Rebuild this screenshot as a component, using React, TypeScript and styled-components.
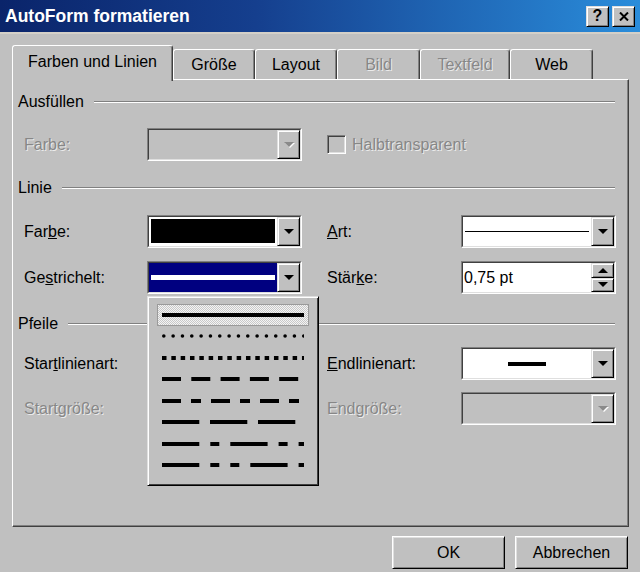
import React from "react"
import styled, { createGlobalStyle } from "styled-components"

const GlobalStyle = createGlobalStyle`
    html, body {
        margin: 0;
        padding: 0;
    }
    body {
        background: #c0c0c0;
        font-family: "Liberation Sans", Arial, sans-serif;
        font-size: 16px;
        color: #000;
    }
`

const Window = styled.div`
    width: 640px;
    height: 572px;
    overflow: hidden;
    background: #c0c0c0;
    display: flex;
    flex-direction: column;
`

const TitleBar = styled.div`
    height: 32px;
    flex: none;
    display: flex;
    align-items: center;
    justify-content: space-between;
    padding: 0 5px 0 5px;
    background: linear-gradient(90deg, #0a246a 0%, #153f8e 40%, #2a8ddb 100%);
    border-bottom: 2px solid #d4d0c8;
`

const Title = styled.span`
    color: #fff;
    font-weight: bold;
    font-size: 17.5px;
`

const CaptionButtons = styled.div`
    display: flex;
    gap: 3px;
`

const CaptionButton = styled.div`
    width: 23px;
    height: 21px;
    box-sizing: border-box;
    background: #c0c0c0;
    border: 1px solid;
    border-color: #dfdfdf #000 #000 #dfdfdf;
    box-shadow: inset 1px 1px #fff, inset -1px -1px #808080;
    display: flex;
    align-items: center;
    justify-content: center;
    font-weight: bold;
    font-size: 16px;
`

const Body = styled.div`
    padding: 11px 11px 0 12px;
    display: flex;
    flex-direction: column;
`

const TabStrip = styled.div`
    height: 34px;
    display: flex;
    align-items: flex-end;
`

const Tab = styled.div<{ $w: number; $active?: boolean; $disabled?: boolean }>`
    width: ${p => p.$w}px;
    height: ${p => (p.$active ? 36 : 30)}px;
    margin-bottom: ${p => (p.$active ? -2 : 0)}px;
    box-sizing: border-box;
    position: relative;
    z-index: ${p => (p.$active ? 2 : 1)};
    background: #c0c0c0;
    border: 1px solid;
    border-bottom: none;
    border-color: #fff #404040 transparent #fff;
    border-radius: 3px 3px 0 0;
    box-shadow: inset -1px 0 #808080;
    display: flex;
    align-items: center;
    justify-content: center;
    padding-bottom: ${p => (p.$active ? 3 : 0)}px;
    color: ${p => (p.$disabled ? "#878787" : "#000")};
    text-shadow: ${p => (p.$disabled ? "1px 1px 0 rgba(255,255,255,0.7)" : "none")};
`

const Panel = styled.div`
    position: relative;
    width: 617px;
    height: 448px;
    box-sizing: border-box;
    border: 1px solid;
    border-color: #fff #404040 #404040 #fff;
    box-shadow: inset -1px -1px #808080;
    display: flex;
    flex-direction: column;
`

const SectionHeader = styled.div<{ $mt: number }>`
    margin-top: ${p => p.$mt}px;
    height: 20px;
    display: flex;
    align-items: center;
    gap: 10px;
    padding: 0 13px 0 5px;

    &::after {
        content: "";
        flex: 1;
        border-top: 1px solid #808080;
        border-bottom: 1px solid #fff;
    }
`

const FieldRow = styled.div<{ $mt: number }>`
    margin-top: ${p => p.$mt}px;
    height: 33px;
    display: grid;
    grid-template-columns: 123px 180px 134px 155px;
    align-items: center;
    padding-left: 11px;
`

const Label = styled.span<{ $disabled?: boolean }>`
    color: ${p => (p.$disabled ? "#878787" : "#000")};
    text-shadow: ${p => (p.$disabled ? "1px 1px 0 rgba(255,255,255,0.7)" : "none")};
    white-space: nowrap;
`

const Combo = styled.div`
    width: 155px;
    height: 33px;
    box-sizing: border-box;
    border: 1px solid;
    border-color: #808080 #fff #fff #808080;
    display: flex;
`

const ComboInner = styled.div<{ $disabled?: boolean }>`
    flex: 1;
    display: flex;
    border: 1px solid;
    border-color: #404040 #dfdfdf #dfdfdf #404040;
    background: ${p => (p.$disabled ? "#c0c0c0" : "#fff")};
`

const ComboValue = styled.div<{ $bg?: string }>`
    flex: 1;
    display: flex;
    align-items: center;
    background: ${p => p.$bg || "transparent"};
`

const Swatch = styled.div`
    flex: 1;
    align-self: stretch;
    margin: 2px 2px 3px 2px;
    background: #000;
`

const LineFill = styled.div<{ $thick: number; $color: string; $inset: number }>`
    flex: 1;
    height: ${p => p.$thick}px;
    margin: 0 ${p => p.$inset}px;
    background: ${p => p.$color};
`

const ArrowSample = styled.div`
    width: 38px;
    height: 4px;
    margin: 0 auto;
    background: #000;
`

const ValueText = styled.span`
    padding-left: 1px;
`

const DropButton = styled.div<{ $disabled?: boolean }>`
    width: 23px;
    flex: none;
    box-sizing: border-box;
    background: #c0c0c0;
    border: 1px solid;
    border-color: #dfdfdf #000 #000 #dfdfdf;
    box-shadow: inset 1px 1px #fff, inset -1px -1px #808080;
    display: flex;
    align-items: center;
    justify-content: center;

    &::before {
        content: "";
        border-left: 5px solid transparent;
        border-right: 5px solid transparent;
        border-top: 5px solid ${p => (p.$disabled ? "#8a8a8a" : "#000")};
        filter: ${p => (p.$disabled ? "drop-shadow(1px 1px 0 #fff)" : "none")};
    }
`

const SpinColumn = styled.div`
    width: 23px;
    flex: none;
    display: flex;
    flex-direction: column;
`

const SpinButton = styled.div<{ $up?: boolean }>`
    flex: 1;
    box-sizing: border-box;
    background: #c0c0c0;
    border: 1px solid;
    border-color: #dfdfdf #000 #000 #dfdfdf;
    box-shadow: inset 1px 1px #fff, inset -1px -1px #808080;
    display: flex;
    align-items: center;
    justify-content: center;

    &::before {
        content: "";
        border-left: 5px solid transparent;
        border-right: 5px solid transparent;
        ${p => (p.$up ? "border-bottom: 5px solid #000;" : "border-top: 5px solid #000;")}
    }
`

const CheckGroup = styled.div`
    display: flex;
    align-items: center;
    gap: 6px;
    grid-column: 3 / 5;
`

const CheckBox = styled.span`
    width: 19px;
    height: 19px;
    box-sizing: border-box;
    border: 1px solid;
    border-color: #808080 #fff #fff #808080;
    box-shadow: inset 1px 1px #404040, inset -1px -1px #dfdfdf;
    background: #c0c0c0;
`

const Popup = styled.div`
    position: absolute;
    left: 134px;
    top: 216px;
    width: 172px;
    height: 190px;
    box-sizing: border-box;
    z-index: 5;
    background: #c0c0c0;
    border: 1px solid;
    border-color: #dfdfdf #000 #000 #dfdfdf;
    box-shadow: inset 1px 1px #fff, inset -1px -1px #404040;
    padding: 7px 9px 0 9px;
    display: flex;
    flex-direction: column;
`

const PopupRow = styled.div<{ $selected?: boolean }>`
    height: 21.5px;
    box-sizing: border-box;
    display: flex;
    align-items: center;
    padding: 0 4px;
    border: 1px solid ${p => (p.$selected ? "#9a9a9a" : "transparent")};
    background: ${p =>
        p.$selected
            ? "repeating-conic-gradient(#c8c8c8 0 25%, #f4f4f4 0 50%) 0 0 / 2px 2px"
            : "transparent"};
`

const ButtonRow = styled.div`
    display: flex;
    justify-content: flex-end;
    gap: 10px;
    margin: 9px 1px 0 0;
`

const PushButton = styled.div`
    width: 113px;
    height: 33px;
    box-sizing: border-box;
    border: 1px solid;
    border-color: #fff #000 #000 #fff;
    box-shadow: inset 1px 1px #dfdfdf, inset -1px -1px #808080;
    display: flex;
    align-items: center;
    justify-content: center;
`

interface DashProps {
    pattern?: string
    round?: boolean
}

function Dash({ pattern, round }: DashProps) {
    return (
        <svg width="142" height="6" viewBox="0 0 142 6" style={{ display: "block" }}>
            <line
                x1={round ? 1.8 : 0}
                y1="3"
                x2="142"
                y2="3"
                stroke="#000"
                strokeWidth={round ? 3.6 : 4}
                strokeLinecap={round ? "round" : "butt"}
                strokeDasharray={pattern}
            />
        </svg>
    )
}

const tabs = [
    { name: "Farben und Linien", w: 161, active: true },
    { name: "Größe", w: 82 },
    { name: "Layout", w: 82 },
    { name: "Bild", w: 83, disabled: true },
    { name: "Textfeld", w: 90, disabled: true },
    { name: "Web", w: 83 },
]

const dashes: DashProps[] = [
    {},
    { pattern: "0 9.33", round: true },
    { pattern: "4.5 4.83" },
    { pattern: "19 10.3" },
    { pattern: "19 10 10 10" },
    { pattern: "37.3 10.7" },
    { pattern: "37.3 11 9 11" },
    { pattern: "37.3 11 9 11 9 11" },
]

export default function App() {
    return (
        <Window>
            <GlobalStyle />
            <TitleBar>
                <Title>AutoForm formatieren</Title>
                <CaptionButtons>
                    <CaptionButton>?</CaptionButton>
                    <CaptionButton>
                        <svg width="10" height="9" viewBox="0 0 10 9">
                            <path d="M1 0.5 L9 8.5 M9 0.5 L1 8.5" stroke="#000" strokeWidth="2" />
                        </svg>
                    </CaptionButton>
                </CaptionButtons>
            </TitleBar>

            <Body>
                <TabStrip>
                    {tabs.map(t => (
                        <Tab key={t.name} $w={t.w} $active={t.active} $disabled={t.disabled}>
                            {t.name}
                        </Tab>
                    ))}
                </TabStrip>

                <Panel>
                    <SectionHeader $mt={12}>Ausfüllen</SectionHeader>
                    <FieldRow $mt={16}>
                        <Label $disabled>Farbe:</Label>
                        <Combo>
                            <ComboInner $disabled>
                                <ComboValue />
                                <DropButton $disabled />
                            </ComboInner>
                        </Combo>
                        <CheckGroup>
                            <CheckBox />
                            <Label $disabled>Halbtransparent</Label>
                        </CheckGroup>
                    </FieldRow>

                    <SectionHeader $mt={17}>Linie</SectionHeader>
                    <FieldRow $mt={17}>
                        <Label>Far<u>b</u>e:</Label>
                        <Combo>
                            <ComboInner>
                                <ComboValue>
                                    <Swatch />
                                </ComboValue>
                                <DropButton />
                            </ComboInner>
                        </Combo>
                        <Label><u>A</u>rt:</Label>
                        <Combo>
                            <ComboInner>
                                <ComboValue>
                                    <LineFill $thick={1} $color="#000" $inset={2} />
                                </ComboValue>
                                <DropButton />
                            </ComboInner>
                        </Combo>
                    </FieldRow>
                    <FieldRow $mt={13}>
                        <Label>Ge<u>s</u>trichelt:</Label>
                        <Combo>
                            <ComboInner>
                                <ComboValue $bg="#000080">
                                    <LineFill $thick={5} $color="#fff" $inset={2} />
                                </ComboValue>
                                <DropButton />
                            </ComboInner>
                        </Combo>
                        <Label>Stär<u>k</u>e:</Label>
                        <Combo>
                            <ComboInner>
                                <ComboValue>
                                    <ValueText>0,75 pt</ValueText>
                                </ComboValue>
                                <SpinColumn>
                                    <SpinButton $up />
                                    <SpinButton />
                                </SpinColumn>
                            </ComboInner>
                        </Combo>
                    </FieldRow>

                    <SectionHeader $mt={20}>Pfeile</SectionHeader>
                    <FieldRow $mt={13}>
                        <Label>Star<u>t</u>linienart:</Label>
                        <span />
                        <Label><u>E</u>ndlinienart:</Label>
                        <Combo>
                            <ComboInner>
                                <ComboValue>
                                    <ArrowSample />
                                </ComboValue>
                                <DropButton />
                            </ComboInner>
                        </Combo>
                    </FieldRow>
                    <FieldRow $mt={12}>
                        <Label $disabled>Startgröße:</Label>
                        <span />
                        <Label $disabled>Endgröße:</Label>
                        <Combo>
                            <ComboInner $disabled>
                                <ComboValue />
                                <DropButton $disabled />
                            </ComboInner>
                        </Combo>
                    </FieldRow>

                    <Popup>
                        {dashes.map((d, i) => (
                            <PopupRow key={i} $selected={i === 0}>
                                <Dash pattern={d.pattern} round={d.round} />
                            </PopupRow>
                        ))}
                    </Popup>
                </Panel>

                <ButtonRow>
                    <PushButton>OK</PushButton>
                    <PushButton>Abbrechen</PushButton>
                </ButtonRow>
            </Body>
        </Window>
    )
}
